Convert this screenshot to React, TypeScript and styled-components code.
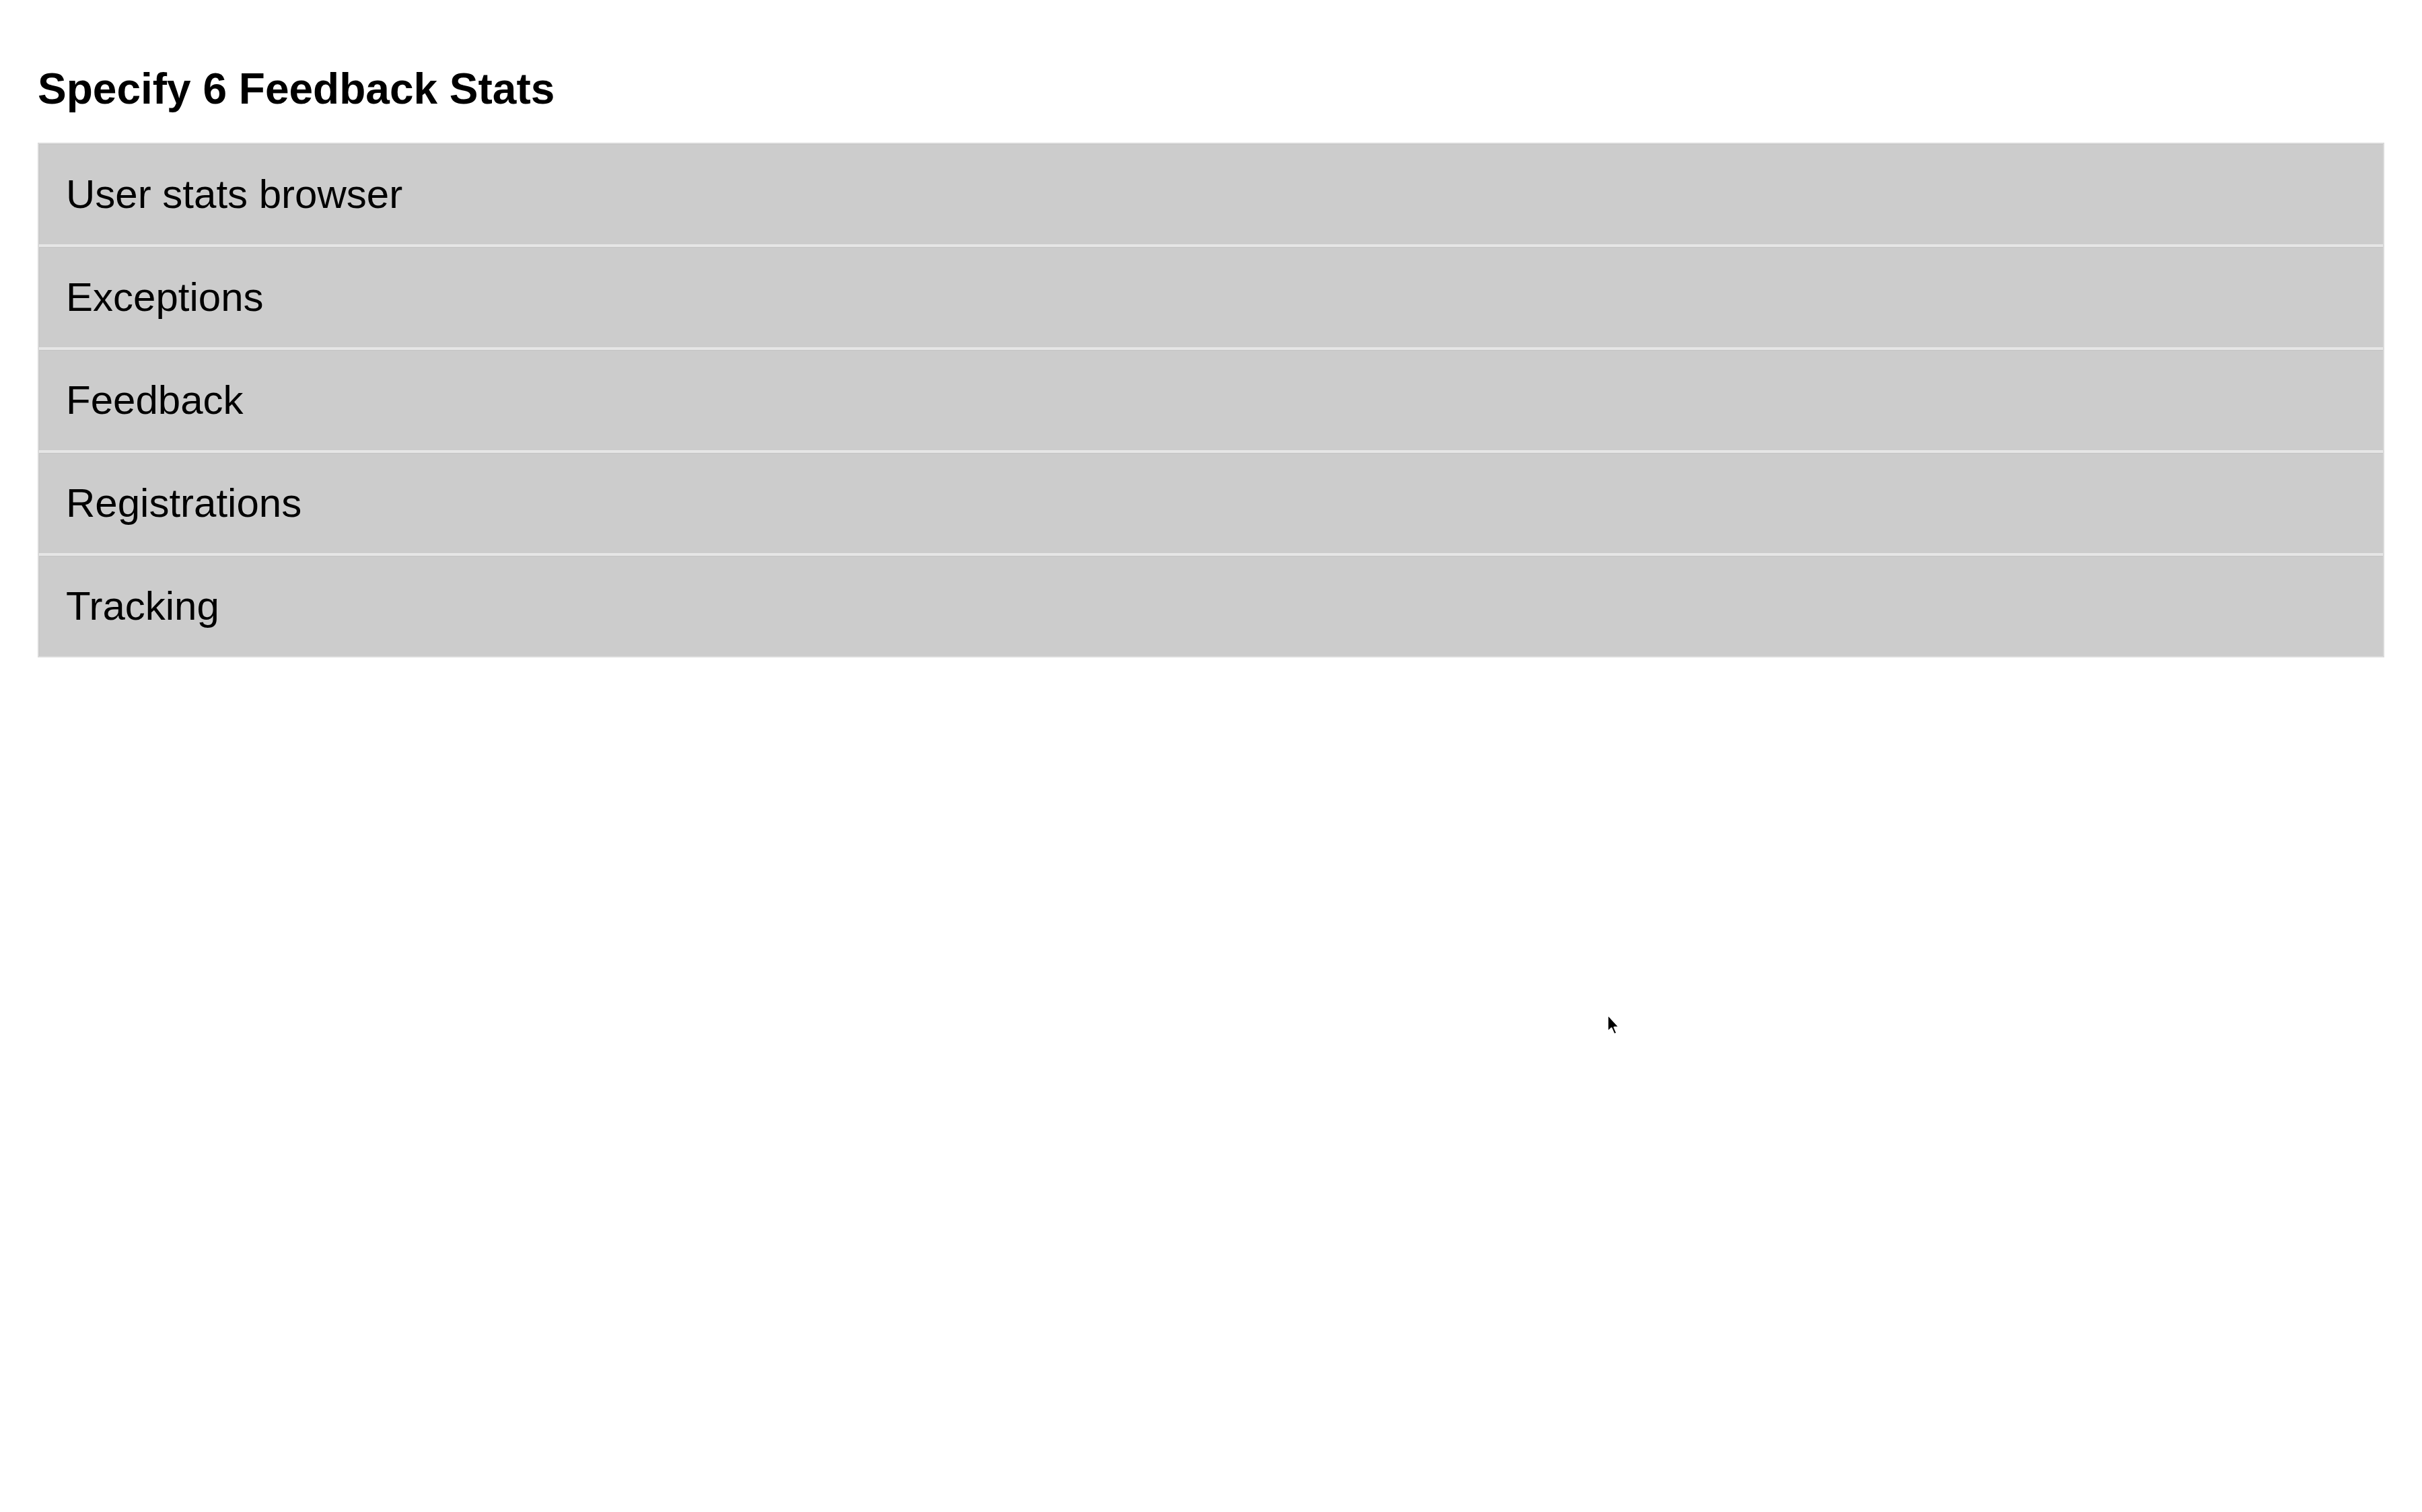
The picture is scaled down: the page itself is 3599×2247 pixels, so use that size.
import React from 'react';
import styled, { createGlobalStyle } from 'styled-components';

const GlobalStyle = createGlobalStyle`
  html, body {
    margin: 0;
    padding: 0;
    background: #ffffff;
  }
  body {
    font-family: "Liberation Sans", Arial, Helvetica, sans-serif;
    color: #000;
  }
`;

const Page = styled.div`
  position: relative;
  min-height: 2247px;
  padding: 95px 56px 0 56px;
  box-sizing: border-box;
`;

const Title = styled.h2`
  margin: 0 0 43px 0;
  font-size: 64px;
  font-weight: 700;
  line-height: normal;
`;

const StatsTable = styled.div`
  display: flex;
  flex-direction: column;
  gap: 4px;
  border: 2px solid #dadada;
  background: #e6e6e6;
`;

const Row = styled.div`
  display: flex;
  align-items: center;
  height: 149px;
  padding-left: 40px;
  background: #cccccc;
  box-shadow: inset 1px 1px 0 #c4c4c4;
  font-size: 60px;
  cursor: pointer;
`;

const Pointer = styled.svg`
  position: absolute;
  left: 2386px;
  top: 1505px;
  width: 24px;
  height: 36px;
`;

const items = ['User stats browser', 'Exceptions', 'Feedback', 'Registrations', 'Tracking'];

const App: React.FC = () => {
  return (
    <>
      <GlobalStyle />
      <Page>
        <Title>Specify 6 Feedback Stats</Title>
        <StatsTable>
          {items.map((item) => (
            <Row key={item}>{item}</Row>
          ))}
        </StatsTable>
        <Pointer viewBox="0 0 12 18">
          <path
            d="M1.5 1.5 L1.5 14 L4.3 11.4 L6.3 16 L8.2 15.2 L6.3 10.8 L10 10.8 Z"
            fill="#000"
            stroke="#fff"
            strokeWidth="1"
            strokeLinejoin="round"
          />
        </Pointer>
      </Page>
    </>
  );
};

export default App;
